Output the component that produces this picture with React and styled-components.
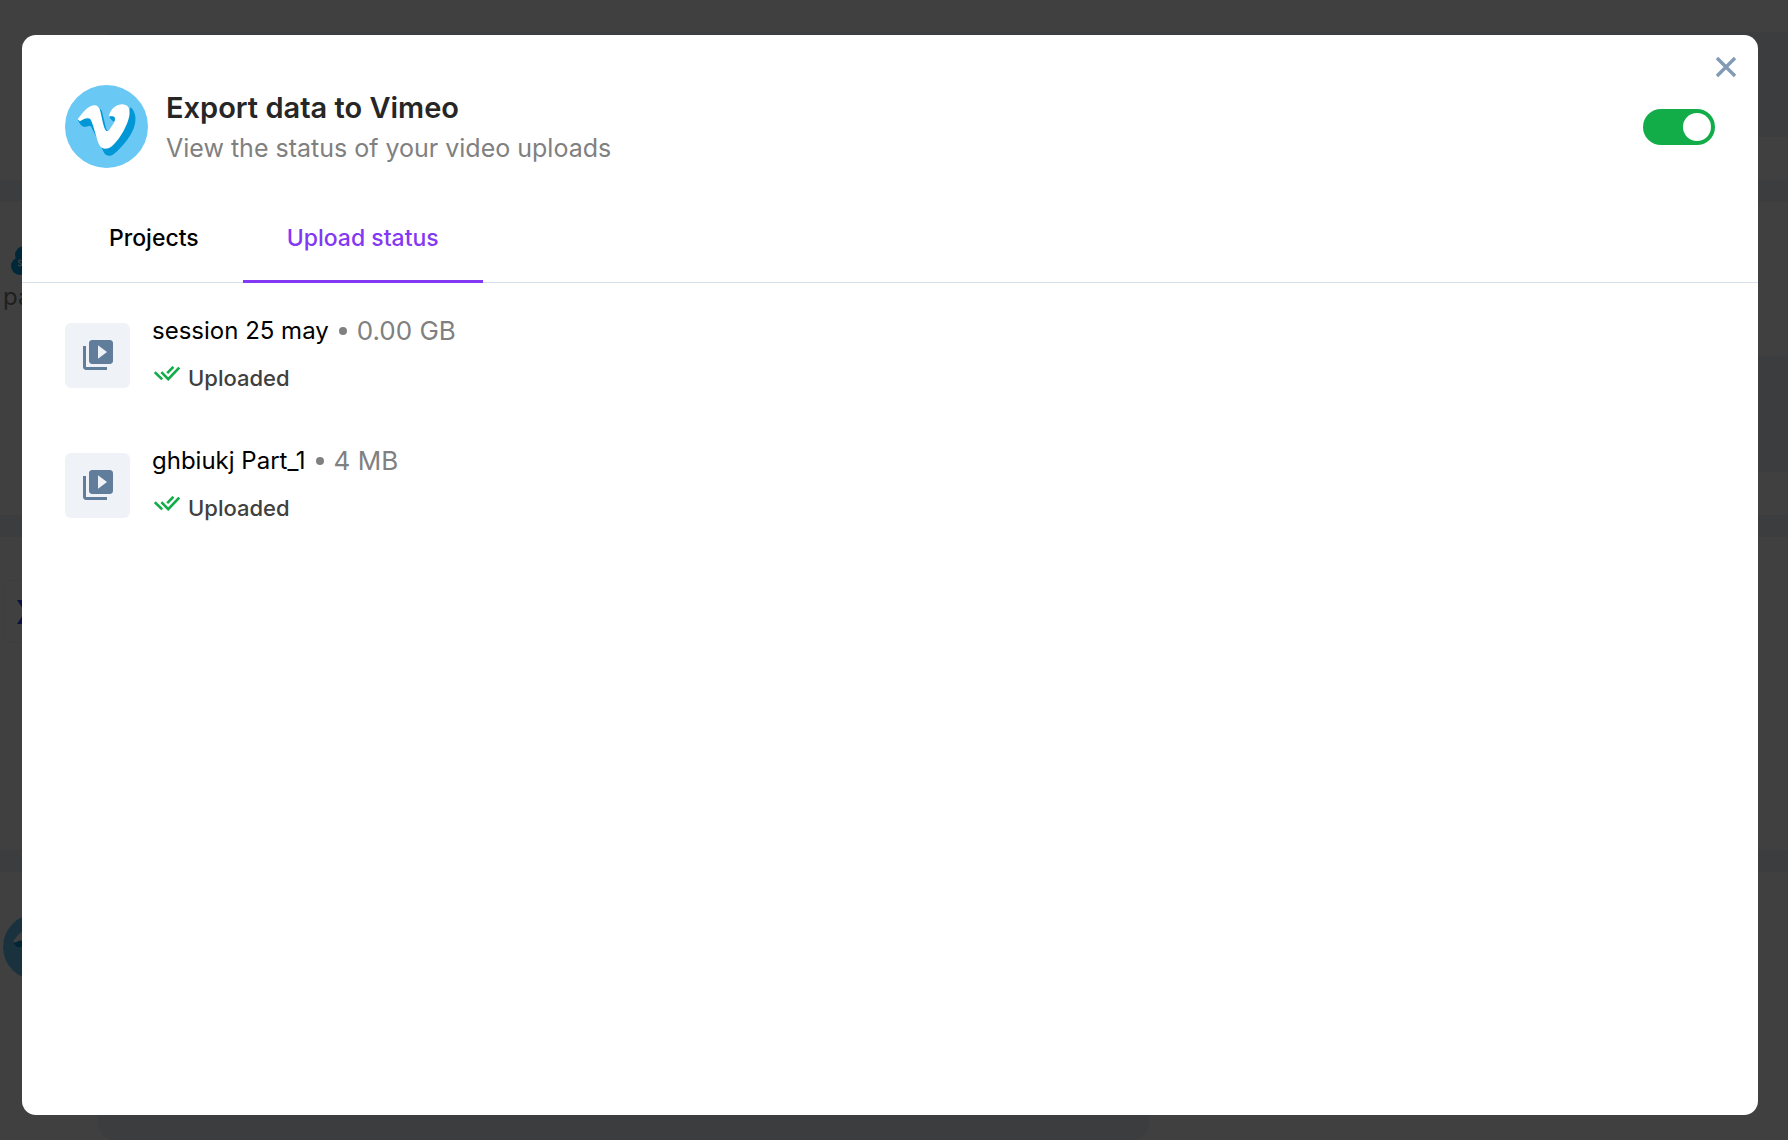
import React, { useState } from "react";
import styled, { createGlobalStyle, css } from "styled-components";
import { MdVideoLibrary } from "react-icons/md";

const GlobalStyle = createGlobalStyle`
  * {
    box-sizing: border-box;
  }
  body {
    margin: 0;
    overflow: hidden;
    font-family: Inter, "Liberation Sans", sans-serif;
    background: #fff;
  }
  h1, h2, p, ul {
    margin: 0;
    padding: 0;
    font-weight: 400;
  }
  button {
    font-family: inherit;
    cursor: pointer;
  }
`

/* page behind the modal */

const Page = styled.div`
  height: 100vh;
  overflow: hidden;
  display: flex;
  flex-direction: column;
  gap: 22px;
  background: #ebf1f8;
`

const Section = styled.section`
  flex: none;
  height: ${(props) => props.$height}px;
  display: grid;
  grid-template-columns: 95px 1fr;
  align-items: start;
  padding: ${(props) => props.$top}px 0 0 3px;
  background: #fff;
`

const Panel = styled.div`
  height: ${(props) => props.$height}px;
  margin-top: ${(props) => props.$gap || 0}px;
  max-width: ${(props) => props.$max || "none"};
  border-radius: ${(props) => props.$max ? "20px" : "20px 0 0 20px"};
  background: #ebf1f8;
`

const Brand = styled.div`
  svg {
    display: block;
    margin-left: 8px;
  }
`

const BrandName = styled.p`
  font-size: 24px;
  line-height: 40px;
  color: #808080;
`

const AppTile = styled.div`
  height: 63px;
  display: flex;
  align-items: center;
  padding-left: 13px;
  border: 1px solid #f2f2f2;
  border-radius: 6px;
`

/* modal */

const Overlay = styled.div`
  position: fixed;
  inset: 0;
  display: flex;
  padding: 35px 30px 25px 22px;
  background: rgba(0, 0, 0, 0.75);
`

const Modal = styled.div`
  position: relative;
  flex: 1;
  min-width: 0;
  border-radius: 14px;
  background: #fff;
  overflow: hidden;
`

const CloseButton = styled.button`
  position: absolute;
  top: 20px;
  right: 20px;
  width: 24px;
  height: 24px;
  padding: 0;
  border: none;
  background: none;

  svg {
    display: block;
  }
`

const Header = styled.header`
  display: flex;
  align-items: center;
  gap: 18px;
  padding: 50px 43px 0;
`

const HeaderText = styled.div`
  flex: 1;
`

const Title = styled.h1`
  font-size: 29px;
  line-height: 42px;
  font-weight: 600;
  color: #262626;
`

const Subtitle = styled.p`
  font-size: 25px;
  line-height: 38px;
  color: #808080;
`

const Switch = styled.input`
  appearance: none;
  width: 72px;
  height: 36px;
  margin: 0;
  padding: 4px;
  display: flex;
  border-radius: 18px;
  background: #b8c4d2;
  cursor: pointer;

  &::before {
    content: "";
    width: 28px;
    height: 28px;
    border-radius: 50%;
    background: #fff;
  }
  &:checked {
    justify-content: flex-end;
    background: #12ad49;
  }
`

const Tabs = styled.div`
  display: flex;
  margin-top: 30px;
  padding: 0 43px;
  border-bottom: 1px solid #d6e1ec;
`

const Tab = styled.button`
  height: 85px;
  margin-bottom: -1px;
  padding: 0 44px 2px;
  border: none;
  border-bottom: 3px solid transparent;
  background: none;
  font-size: 23px;
  line-height: 32px;
  font-weight: 500;
  color: #000;

  ${(props) => props.$active && css`
    border-bottom-color: #8338f4;
    color: #8338f4;
  `}
`

const UploadList = styled.ul`
  display: flex;
  flex-direction: column;
  gap: 51px;
  padding: 30px 43px;
  list-style: none;
`

const UploadRow = styled.li`
  display: flex;
  gap: 22px;
`

const Thumb = styled.div`
  width: 65px;
  height: 65px;
  margin-top: 10px;
  padding: 0 0 2px 1px;
  display: flex;
  align-items: center;
  justify-content: center;
  border-radius: 6px;
  background: #eff3f8;
  color: #617d9c;
`

const UploadName = styled.h2`
  display: flex;
  align-items: center;
  gap: 10px;
  font-size: 24px;
  line-height: 36px;
  color: #000;
`

const Dot = styled.span`
  width: 8px;
  height: 8px;
  border-radius: 50%;
  background: #808080;
`

const Size = styled.span`
  font-size: 26px;
  color: #808080;
`

const Status = styled.p`
  display: flex;
  align-items: flex-start;
  gap: 8px;
  margin-top: 15px;
  font-size: 22px;
  line-height: 28px;
  font-weight: 500;
  color: #404040;

  svg {
    margin: 2px 0 0 2px;
  }
`

const VimeoLogo = ({ size }) => {
    return(
        <svg width={size} height={size} viewBox="0 0 250 250" aria-hidden="true">
            <circle cx="125" cy="125" r="125" fill="#6ac8f5" />
            <path
                d="M38 103 C45 119 52 127 62 126 C72 125 76 120 80 128 L118 205 C124 214 136 216 145 209 C170 190 196 158 207 130 C216 105 214 83 198 67 L181 94 L137 134 C130 142 126 139 123 128 L111 78 L98 62 L74 102 Z M132 93 C137 103 143 108 152 114 L160 92 Z"
                fill="#0097d6"
            />
            <path
                d="M38 103 C50 88 62 71 77 64 C88 58 100 60 104 71 C109 85 114 121 121 134 C125 141 129 140 134 134 C143 122 153 108 150 99 C147 92 138 94 132 95 C135 77 150 59 171 58 C189 58 197 69 194 90 C190 121 161 169 140 185 C126 196 110 193 103 180 C95 165 88 128 79 108 C75 97 67 97 60 101 L45 109 Z"
                fill="#fff"
            />
        </svg>
    )
}

const DoubleCheck = () => {
    return(
        <svg width="26" height="15" viewBox="0 0 26 15" fill="none" stroke="#12ad49" strokeWidth="2.6" aria-hidden="true">
            <path d="M0.8 6.2 L8.2 13.4 M7.4 6.2 L14.2 13.2 L25.2 1.6 M13.2 7.2 L19.4 0.8" />
        </svg>
    )
}

const CloudLogo = () => {
    return(
        <svg width="44" height="32" viewBox="0 0 44 32" aria-hidden="true">
            <circle cx="13" cy="10" r="9" fill="#00a1e0" />
            <circle cx="25" cy="11" r="10" fill="#00a1e0" />
            <circle cx="9" cy="21" r="9" fill="#00a1e0" />
            <circle cx="20" cy="21" r="10" fill="#00a1e0" />
            <circle cx="34" cy="17" r="9" fill="#00a1e0" />
            <path d="M11 16 C8 14 6 17 9 18 C12 19 10 22 7 20" fill="none" stroke="#fff" strokeWidth="1.2" />
        </svg>
    )
}

const uploads = [
    { name: "session 25 may", size: "0.00 GB", status: "Uploaded" },
    { name: "ghbiukj Part_1", size: "4 MB", status: "Uploaded" },
]

const Background = () => {
    return(
        <Page aria-hidden="true">
            <Section $height={180} $top={32}>
                <span />
                <Panel $height={105} />
            </Section>
            <Section $height={313} $top={43}>
                <Brand>
                    <CloudLogo />
                    <BrandName>pa</BrandName>
                </Brand>
                <Panel $height={116} $gap={111} />
            </Section>
            <Section $height={313} $top={43}>
                <AppTile>
                    <svg width="26" height="24" viewBox="0 0 26 24">
                        <path d="M0 0 H8 L13 8 L18 0 H26 L18 12 L26 24 H18 L13 16 L8 24 H0 L8 12 Z" fill="#2d48ff" />
                    </svg>
                </AppTile>
            </Section>
            <Section $height={313} $top={42}>
                <VimeoLogo size={66} />
                <Panel $height={228} $max="1051px" />
            </Section>
        </Page>
    )
}

const App = () => {
    const [tab, setTab] = useState("Upload status")
    const [enabled, setEnabled] = useState(true)

    return(
        <>
            <GlobalStyle />
            <Background />
            <Overlay>
                <Modal role="dialog" aria-modal="true" aria-labelledby="export-title">
                    <CloseButton type="button" aria-label="Close">
                        <svg width="24" height="24" viewBox="0 0 24 24" stroke="#839ab5" strokeWidth="3.4">
                            <path d="M3 3 L21 21 M21 3 L3 21" />
                        </svg>
                    </CloseButton>
                    <Header>
                        <VimeoLogo size={83} />
                        <HeaderText>
                            <Title id="export-title">Export data to Vimeo</Title>
                            <Subtitle>View the status of your video uploads</Subtitle>
                        </HeaderText>
                        <Switch
                            type="checkbox"
                            role="switch"
                            aria-labelledby="export-title"
                            checked={enabled}
                            onChange={(e) => setEnabled(e.target.checked)}
                        />
                    </Header>
                    <Tabs role="tablist">
                        {["Projects", "Upload status"].map((name) => (
                            <Tab
                                key={name}
                                type="button"
                                role="tab"
                                aria-selected={tab === name}
                                $active={tab === name}
                                onClick={() => setTab(name)}
                            >
                                {name}
                            </Tab>
                        ))}
                    </Tabs>
                    <UploadList>
                        {uploads.map((item) => (
                            <UploadRow key={item.name}>
                                <Thumb>
                                    <MdVideoLibrary size={36} />
                                </Thumb>
                                <div>
                                    <UploadName>
                                        {item.name}
                                        <Dot />
                                        <Size>{item.size}</Size>
                                    </UploadName>
                                    <Status>
                                        <DoubleCheck />
                                        {item.status}
                                    </Status>
                                </div>
                            </UploadRow>
                        ))}
                    </UploadList>
                </Modal>
            </Overlay>
        </>
    )
}

export default App
